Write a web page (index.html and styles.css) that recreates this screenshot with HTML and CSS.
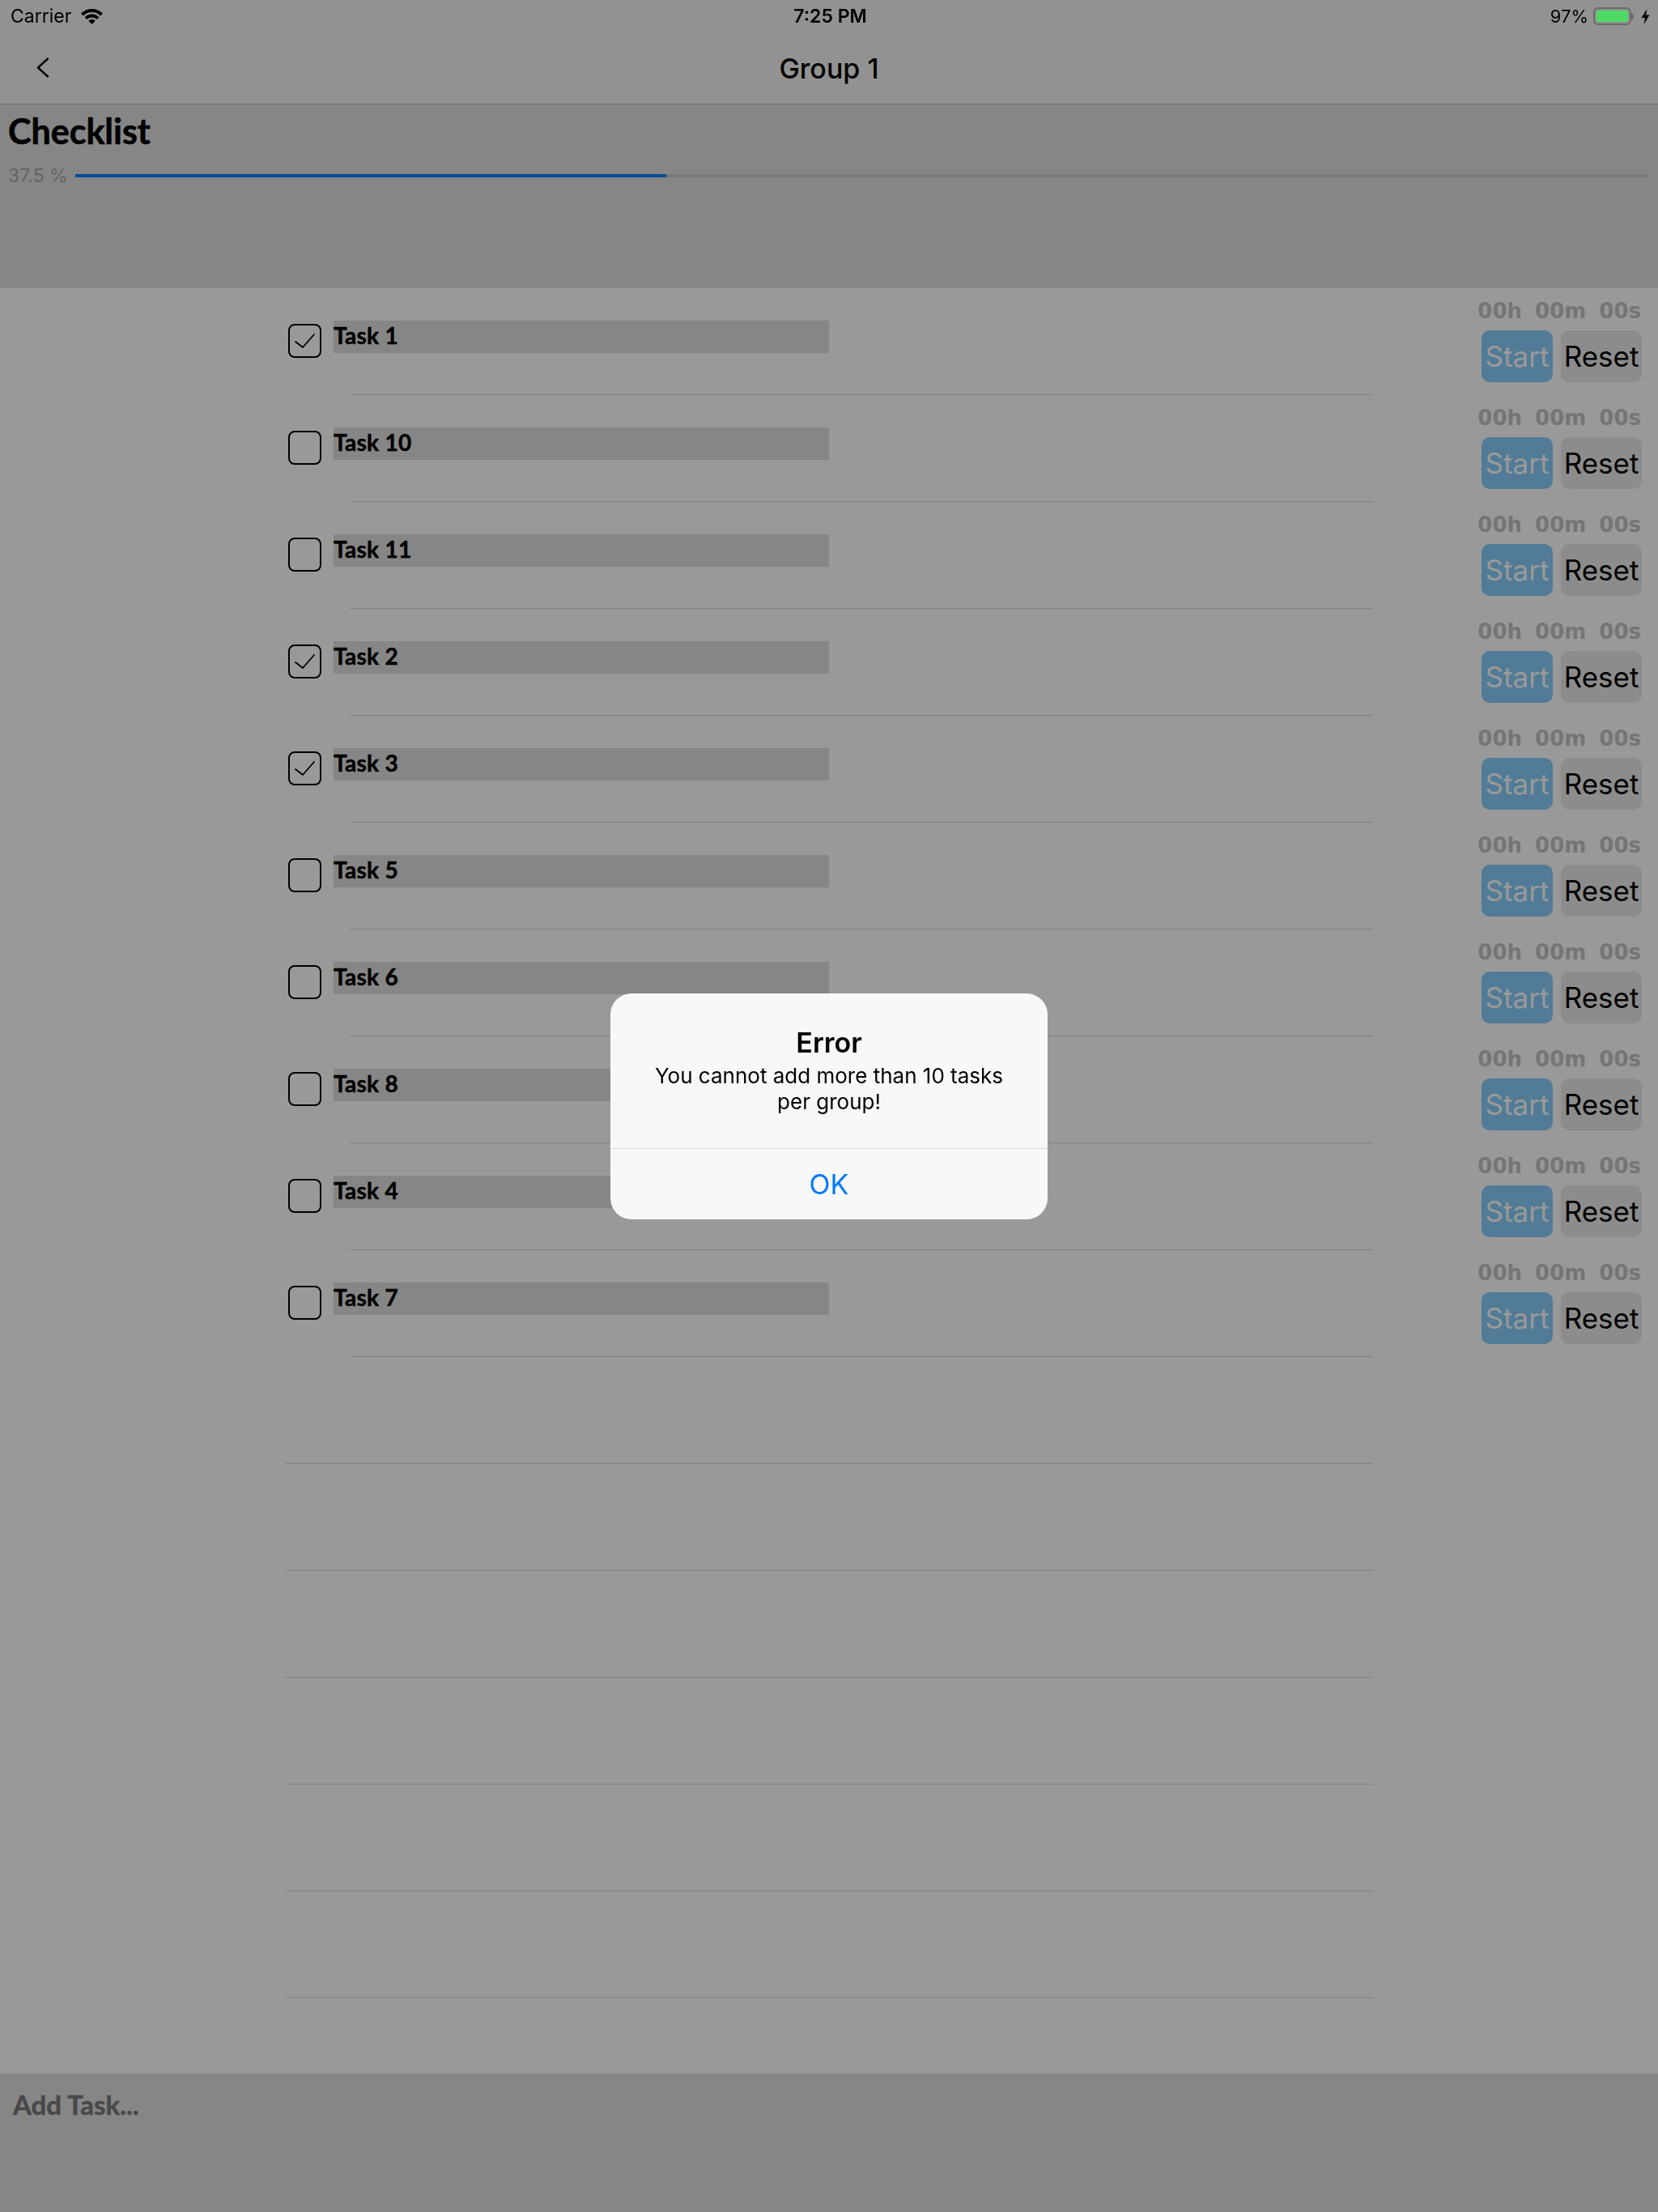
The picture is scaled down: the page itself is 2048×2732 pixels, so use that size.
FILE: index.html
```html
<!DOCTYPE html>
<html lang="en">
<head>
<meta charset="utf-8">
<title>Group 1</title>
<link rel="stylesheet" href="styles.css">
</head>
<body>
<div class="screen">
  <header class="topbar">
    <div class="statusbar">
      <div class="sb-left">
        <span class="carrier">Carrier</span>
        <svg class="wifi" width="27" height="19" viewBox="0 0 27 19"><path d="M13.5 19 L9.26 14.76 A6 6 0 0 1 17.74 14.76 Z"/><path d="M4.66 10.16 A12.5 12.5 0 0 1 22.34 10.16 L19.51 12.99 A8.5 8.5 0 0 0 7.49 12.99 Z"/><path d="M0.07 5.57 A19 19 0 0 1 26.93 5.57 L24.11 8.39 A15 15 0 0 0 2.89 8.39 Z"/></svg>
      </div>
      <div class="sb-time">7:25 PM</div>
      <div class="sb-right">
        <span class="pct-batt">97%</span>
        <span class="battery"><span class="battery-fill"></span></span>
        <span class="battery-nub"></span>
        <svg class="bolt" width="11" height="19" viewBox="0 0 11 19"><path d="M7.5 0 L0.5 11 H5 L3.5 19 L10.5 7.5 H6 Z"/></svg>
      </div>
    </div>
    <nav class="navbar">
      <svg class="back" width="18" height="26" viewBox="0 0 18 26"><polyline points="14,1.5 2,12.5 14,23.5"/></svg>
      <div class="nav-title">Group 1</div>
      <span></span>
    </nav>
  </header>

  <section class="summary">
    <h1 class="title">Checklist</h1>
    <div class="progress-row">
      <span class="pct">37.5 %</span>
      <div class="track"><div class="fill" style="width:37.57%"></div></div>
    </div>
  </section>

  <main class="list">
    <div class="row">
      <div class="cell"><div class="cell-body"><span class="checkbox"><svg width="37" height="38" viewBox="0 0 37 38"><polyline points="7,20 16,27 30,11"/></svg></span><div class="field">Task 1</div></div><div class="sep inset"></div></div>
      <div class="timer"><div class="clock"><span>00h</span><span>00m</span><span>00s</span></div><div class="btns"><span class="btn start">Start</span><span class="btn reset">Reset</span></div></div>
    </div>
    <div class="row">
      <div class="cell"><div class="cell-body"><span class="checkbox"></span><div class="field">Task 10</div></div><div class="sep inset"></div></div>
      <div class="timer"><div class="clock"><span>00h</span><span>00m</span><span>00s</span></div><div class="btns"><span class="btn start">Start</span><span class="btn reset">Reset</span></div></div>
    </div>
    <div class="row">
      <div class="cell"><div class="cell-body"><span class="checkbox"></span><div class="field">Task 11</div></div><div class="sep inset"></div></div>
      <div class="timer"><div class="clock"><span>00h</span><span>00m</span><span>00s</span></div><div class="btns"><span class="btn start">Start</span><span class="btn reset">Reset</span></div></div>
    </div>
    <div class="row">
      <div class="cell"><div class="cell-body"><span class="checkbox"><svg width="37" height="38" viewBox="0 0 37 38"><polyline points="7,20 16,27 30,11"/></svg></span><div class="field">Task 2</div></div><div class="sep inset"></div></div>
      <div class="timer"><div class="clock"><span>00h</span><span>00m</span><span>00s</span></div><div class="btns"><span class="btn start">Start</span><span class="btn reset">Reset</span></div></div>
    </div>
    <div class="row">
      <div class="cell"><div class="cell-body"><span class="checkbox"><svg width="37" height="38" viewBox="0 0 37 38"><polyline points="7,20 16,27 30,11"/></svg></span><div class="field">Task 3</div></div><div class="sep inset"></div></div>
      <div class="timer"><div class="clock"><span>00h</span><span>00m</span><span>00s</span></div><div class="btns"><span class="btn start">Start</span><span class="btn reset">Reset</span></div></div>
    </div>
    <div class="row">
      <div class="cell"><div class="cell-body"><span class="checkbox"></span><div class="field">Task 5</div></div><div class="sep inset"></div></div>
      <div class="timer"><div class="clock"><span>00h</span><span>00m</span><span>00s</span></div><div class="btns"><span class="btn start">Start</span><span class="btn reset">Reset</span></div></div>
    </div>
    <div class="row">
      <div class="cell"><div class="cell-body"><span class="checkbox"></span><div class="field">Task 6</div></div><div class="sep inset"></div></div>
      <div class="timer"><div class="clock"><span>00h</span><span>00m</span><span>00s</span></div><div class="btns"><span class="btn start">Start</span><span class="btn reset">Reset</span></div></div>
    </div>
    <div class="row">
      <div class="cell"><div class="cell-body"><span class="checkbox"></span><div class="field">Task 8</div></div><div class="sep inset"></div></div>
      <div class="timer"><div class="clock"><span>00h</span><span>00m</span><span>00s</span></div><div class="btns"><span class="btn start">Start</span><span class="btn reset">Reset</span></div></div>
    </div>
    <div class="row">
      <div class="cell"><div class="cell-body"><span class="checkbox"></span><div class="field">Task 4</div></div><div class="sep inset"></div></div>
      <div class="timer"><div class="clock"><span>00h</span><span>00m</span><span>00s</span></div><div class="btns"><span class="btn start">Start</span><span class="btn reset">Reset</span></div></div>
    </div>
    <div class="row">
      <div class="cell"><div class="cell-body"><span class="checkbox"></span><div class="field">Task 7</div></div><div class="sep inset"></div></div>
      <div class="timer"><div class="clock"><span>00h</span><span>00m</span><span>00s</span></div><div class="btns"><span class="btn start">Start</span><span class="btn reset">Reset</span></div></div>
    </div>
    <div class="row"><div class="cell"><div class="cell-body"></div><div class="sep"></div></div></div>
    <div class="row"><div class="cell"><div class="cell-body"></div><div class="sep"></div></div></div>
    <div class="row"><div class="cell"><div class="cell-body"></div><div class="sep"></div></div></div>
    <div class="row"><div class="cell"><div class="cell-body"></div><div class="sep"></div></div></div>
    <div class="row"><div class="cell"><div class="cell-body"></div><div class="sep"></div></div></div>
    <div class="row"><div class="cell"><div class="cell-body"></div><div class="sep"></div></div></div>
  </main>

  <footer class="composer">
    <div class="add">Add Task...</div>
  </footer>
</div>

<div class="dim">
  <div class="alert">
    <div class="alert-content">
      <div class="alert-title">Error</div>
      <div class="alert-msg">You cannot add more than 10 tasks per group!</div>
    </div>
    <div class="alert-btn">OK</div>
  </div>
</div>
</body>
</html>
```
FILE: styles.css
```css
* { box-sizing: border-box; }
html, body { margin: 0; padding: 0; }
body {
  width: 2048px;
  height: 2732px;
  overflow: hidden;
  font-family: Inter, "Liberation Sans", sans-serif;
  color: #000;
  background: #fff;
}

.screen {
  display: flex;
  flex-direction: column;
  height: 2732px;
}

/* top bar */
.topbar {
  background: #f4f4f4;
  border-bottom: 1px solid #b4b4b4;
}
.statusbar {
  position: relative;
  z-index: 20;
  height: 40px;
  display: grid;
  grid-template-columns: 1fr auto 1fr;
  align-items: center;
  padding: 0 10px 0 13px;
  font-size: 23px;
}
.sb-left { display: flex; align-items: center; gap: 12px; }
.wifi path { fill: #000; }
.sb-time { font-weight: 600; font-size: 23px; }
.sb-right { justify-self: end; display: flex; align-items: center; }
.pct-batt { margin-right: 6px; font-size: 22px; }
.battery {
  width: 47px;
  height: 22px;
  border: 2px solid #6a6a6a;
  border-radius: 6px;
  padding: 2px;
  display: flex;
}
.battery-fill { flex: 1; background: #4cd964; border-radius: 2px; }
.battery-nub {
  width: 3px;
  height: 7px;
  background: #6a6a6a;
  border-radius: 0 2px 2px 0;
  margin-right: 9px;
}
.bolt path { fill: #000; }

.navbar {
  height: 88px;
  display: grid;
  grid-template-columns: 1fr auto 1fr;
  align-items: center;
  padding: 0 45px;
}
.back polyline { fill: none; stroke: #000; stroke-width: 2.4; stroke-linecap: round; stroke-linejoin: round; }
.nav-title { font-size: 34px; font-weight: 500; }

/* summary */
.summary {
  background: #dfdfdf;
  height: 227px;
  padding: 8px 0 0 10px;
}
.title {
  margin: 0;
  font: 700 43px/50px Lato, "Liberation Sans", sans-serif;
  -webkit-text-stroke: 0.6px #000;
}
.progress-row {
  display: flex;
  align-items: center;
  gap: 9px;
  margin-top: 16px;
  padding-right: 12px;
}
.pct { font-size: 23px; line-height: 28px; color: #a8a8a8; }
.track { flex: 1; height: 4px; background: #cccccc; }
.fill { height: 100%; background: #007aff; }

/* list */
.list { flex: 1; background: #fff; overflow: hidden; }
.row { display: flex; height: 132px; }
.cell {
  margin-left: 352px;
  width: 1344px;
  display: flex;
  flex-direction: column;
}
.cell-body {
  height: 131px;
  display: flex;
  align-items: flex-start;
  padding: 40px 0 0 4px;
  gap: 15px;
}
.sep { height: 1px; background: #d5d5d5; }
.sep.inset { margin-left: 80px; }

.checkbox {
  margin-top: 4px;
  width: 41px;
  height: 42px;
  border: 2px solid #000;
  border-radius: 8px;
  display: block;
}
.checkbox svg { display: block; }
.checkbox polyline { fill: none; stroke: #000; stroke-width: 1.8; stroke-linecap: round; stroke-linejoin: round; }

.field {
  width: 612px;
  height: 40px;
  background: #dfdfdf;
  font: 700 28px/36px Lato, "Liberation Sans", sans-serif;
  letter-spacing: 0.3px;
  -webkit-text-stroke: 0.5px #000;
}

.timer {
  margin-left: auto;
  margin-right: 20px;
  padding-top: 13px;
  display: flex;
  flex-direction: column;
  align-items: flex-end;
}
.clock {
  display: flex;
  gap: 16px;
  font: 700 26px/30px "DejaVu Sans", sans-serif;
  color: #c4c4c4;
  padding-right: 1px;
}
.btns { display: flex; gap: 10px; margin-top: 9px; }
.btn {
  height: 64px;
  border-radius: 10px;
  display: flex;
  align-items: center;
  justify-content: center;
  font-size: 35px;
}
.btn.start { width: 88px; background: #87cefa; color: #fff; }
.btn.reset { width: 100px; background: #eaeaea; color: #000; }

/* composer */
.composer {
  height: 171px;
  background: #dfdfdf;
  padding: 18px 16px 0;
}
.add {
  font: 700 33px/40px Lato, "Liberation Sans", sans-serif;
  color: #787878;
  -webkit-text-stroke: 0.5px #787878;
}

/* alert */
.dim {
  position: fixed;
  inset: 0;
  z-index: 10;
  background: rgba(0, 0, 0, 0.4);
  display: flex;
  align-items: center;
  justify-content: center;
}
.alert {
  width: 540px;
  background: #f8f8f8;
  border-radius: 26px;
  overflow: hidden;
  text-align: center;
}
.alert-content { padding: 41px 32px 41px; }
.alert-title { font-size: 34px; line-height: 40px; font-weight: 600; }
.alert-msg { margin-top: 5px; font-size: 26px; line-height: 32px; }
.alert-btn {
  border-top: 1px solid #dbdbdf;
  height: 88px;
  display: flex;
  align-items: center;
  justify-content: center;
  color: #007aff;
  font-size: 34px;
}
```
